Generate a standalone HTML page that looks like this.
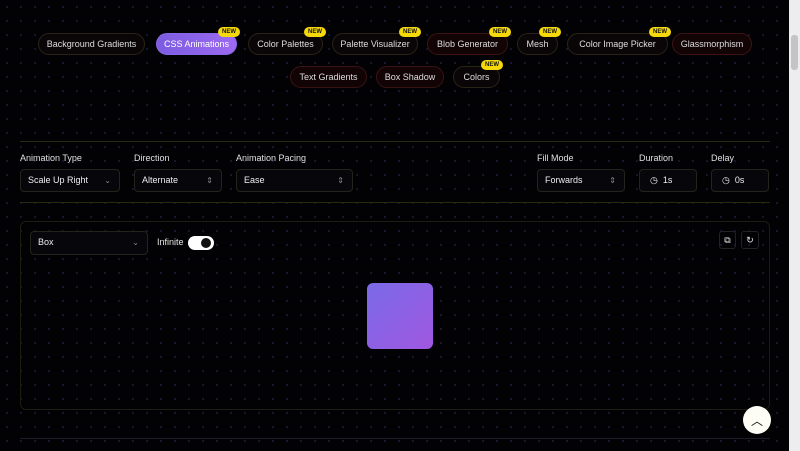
<!DOCTYPE html>
<html style="overflow:hidden;background:#020104"><head><style>
*{box-sizing:border-box;margin:0;padding:0}
body{width:800px;height:451px;overflow:hidden;background:#020104;background-image:radial-gradient(#1c1c3a 0.8px,transparent 1px);background-size:14px 14px;font-family:"Liberation Sans",sans-serif;color:#e8e8e8;position:relative}
.a{position:absolute}
.pill{position:absolute;height:22px;border-radius:11px;border:1px solid #2a2416;background:#0a0608;font-size:9px;line-height:20px;text-align:center;color:#ddd}
.pill.r{border-color:#3a1414;background:#120405}
.new{position:absolute;top:-7px;right:-4px;background:#f5d90a;color:#111;font-size:6px;font-weight:bold;border-radius:6px;padding:0 4px;line-height:10px;height:10px}
.lbl{position:absolute;top:153px;font-size:9px;color:#e0e0e0}
.inp{position:absolute;top:169px;height:23px;border:1px solid #24241c;border-radius:4px;background:#07060a;font-size:9px;line-height:21px;padding-left:7px;color:#eee}
.inp .c{position:absolute;right:8px;top:0;color:#888;font-size:8px}
.line{position:absolute;height:1px;background:#2a2a10}
</style></head><body>
<svg style="position:fixed;left:789px;top:0;z-index:50" width="11" height="451"><rect width="11" height="451" fill="#ededed"/><rect x="2" y="35" width="7" height="35" rx="3" fill="#c4c4c4"/></svg>

<div class="pill" style="left:38px;top:33px;width:107px">Background Gradients</div>
<div class="pill" style="left:156px;top:33px;width:81px;background:linear-gradient(90deg,#7c5ce0,#9c6af0);border-color:#8a66ea;color:#fff">CSS Animations<span class="new">NEW</span></div>
<div class="pill" style="left:248px;top:33px;width:75px">Color Palettes<span class="new">NEW</span></div>
<div class="pill" style="left:332px;top:33px;width:86px">Palette Visualizer<span class="new">NEW</span></div>
<div class="pill r" style="left:427px;top:33px;width:81px">Blob Generator<span class="new">NEW</span></div>
<div class="pill" style="left:517px;top:33px;width:41px">Mesh<span class="new">NEW</span></div>
<div class="pill" style="left:567px;top:33px;width:101px">Color Image Picker<span class="new">NEW</span></div>
<div class="pill r" style="left:672px;top:33px;width:80px">Glassmorphism</div>
<div class="pill r" style="left:290px;top:66px;width:77px">Text Gradients</div>
<div class="pill r" style="left:376px;top:66px;width:68px">Box Shadow</div>
<div class="pill" style="left:453px;top:66px;width:47px">Colors<span class="new">NEW</span></div>

<div class="line" style="left:20px;top:141px;width:750px"></div>
<div class="lbl" style="left:20px">Animation Type</div>
<div class="lbl" style="left:134px">Direction</div>
<div class="lbl" style="left:236px">Animation Pacing</div>
<div class="lbl" style="left:537px">Fill Mode</div>
<div class="lbl" style="left:639px">Duration</div>
<div class="lbl" style="left:711px">Delay</div>
<div class="inp" style="left:20px;width:100px">Scale Up Right<span class="c">⌄</span></div>
<div class="inp" style="left:134px;width:88px">Alternate<span class="c">⇕</span></div>
<div class="inp" style="left:236px;width:117px">Ease<span class="c">⇕</span></div>
<div class="inp" style="left:537px;width:88px">Forwards<span class="c">⇕</span></div>
<div class="inp" style="left:639px;width:58px;padding-left:10px">◷&nbsp; 1s</div>
<div class="inp" style="left:711px;width:58px;padding-left:10px">◷&nbsp; 0s</div>
<div class="line" style="left:20px;top:202px;width:750px"></div>

<div class="a" style="left:20px;top:221px;width:750px;height:189px;border:1px solid #1c1c10;border-radius:6px"></div>
<div class="inp" style="left:30px;top:231px;width:118px;height:24px">Box<span class="c">⌄</span></div>
<div class="a" style="left:157px;top:237px;font-size:9px">Infinite</div>
<div class="a" style="left:188px;top:236px;width:26px;height:14px;border-radius:7px;background:#fff"></div>
<div class="a" style="left:201px;top:238px;width:10px;height:10px;border-radius:5px;background:#111"></div>
<div class="a" style="left:719px;top:231px;width:17px;height:18px;border:1px solid #222;border-radius:3px;font-size:9px;text-align:center;line-height:16px">⧉</div>
<div class="a" style="left:741px;top:231px;width:18px;height:18px;border:1px solid #222;border-radius:3px;font-size:9px;text-align:center;line-height:16px">↻</div>
<div class="a" style="left:367px;top:283px;width:66px;height:66px;border-radius:6px;background:linear-gradient(135deg,#7a6ae8,#a058e0)"></div>
<div class="a" style="left:743px;top:406px;width:28px;height:28px;border-radius:14px;background:#fdfdf5;color:#111;text-align:center;font-size:12px;line-height:30px">︿</div>
<div class="line" style="left:20px;top:438px;width:750px;background:#1c1c2c"></div>
</body></html>
